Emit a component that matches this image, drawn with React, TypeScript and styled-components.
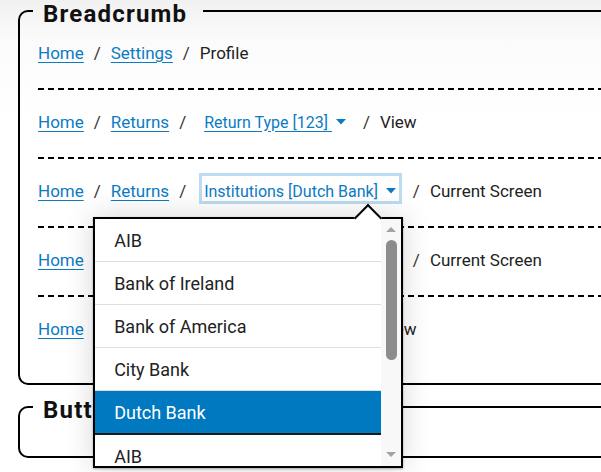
import React from "react";
import styled, { createGlobalStyle } from "styled-components";

const GlobalStyle = createGlobalStyle`
  html, body {
    margin: 0;
    padding: 0;
  }
  body {
    width: 601px;
    height: 472px;
    overflow: hidden;
    font-family: Roboto, "Liberation Sans", Arial, sans-serif;
    color: #222;
    background: linear-gradient(180deg, #f1f1f1 0, #fbfbfb 40px, #ffffff 120px);
  }
`;

const Page = styled.div`
  width: 760px;
  padding: 0 0 0 18px;
  margin-top: -5px;
`;

const Section = styled.fieldset<{ $gap?: number }>`
  margin: 0 0 ${p => p.$gap ?? 0}px 0;
  padding: 0 0 17px 18px;
  border: 2px solid #000;
  border-radius: 10px;
  min-width: 0;
`;

const Legend = styled.legend`
  margin-left: -5px;
  padding: 6px 16px 0 10px;
  font-size: 24px;
  line-height: 26px;
  font-weight: 700;
  letter-spacing: 1.2px;
  color: #111;
`;

const Rows = styled.div`
  margin-top: -6px;
`;

const EmptyBody = styled.div`
  height: 16px;
`;

const Row = styled.nav<{ $last?: boolean }>`
  display: flex;
  align-items: center;
  height: 69px;
  box-sizing: border-box;
  padding-bottom: 5px;
  font-size: 17px;
  background: ${p =>
    p.$last
      ? "none"
      : "linear-gradient(to right, #000 6px, transparent 6px) 0 100% / 10px 2px repeat-x"};
`;

const Crumb = styled.a`
  color: #0b7bc4;
  text-decoration: underline;
  text-underline-offset: 3px;
  cursor: pointer;
`;

const Current = styled.span`
  color: #222;
`;

const Sep = styled.span`
  margin: 0 10px;
  color: #333;
`;

const ToggleWrap = styled.span`
  position: relative;
  display: inline-flex;
  margin: 0 1px 5px 3px;
`;

const Toggle = styled.button<{ $open?: boolean }>`
  display: inline-flex;
  align-items: center;
  gap: 4px;
  height: 31px;
  box-sizing: border-box;
  padding: 5px 3px 0 2px;
  margin: 0;
  border: 3px solid ${p => (p.$open ? "#bcdcf2" : "transparent")};
  background: transparent;
  font: inherit;
  font-size: 16px;
  color: #0b7bc4;
  cursor: pointer;
`;

const ToggleText = styled.span<{ $open?: boolean }>`
  text-decoration: ${p => (p.$open ? "none" : "underline")};
  text-underline-offset: 3px;
`;

const Menu = styled.div`
  position: absolute;
  z-index: 10;
  top: 44px;
  left: -106px;
  width: 310px;
  height: 251px;
  box-sizing: border-box;
  display: flex;
  border: 2px solid #000;
  background: #fff;
  box-shadow: 0 0 28px rgba(0, 0, 0, 0.16), 0 1px 2px rgba(0, 0, 0, 0.3);
`;

const Notch = styled.span`
  position: absolute;
  top: -11px;
  left: 263px;
  width: 20px;
  height: 20px;
  box-sizing: border-box;
  border-top: 2px solid #000;
  border-left: 2px solid #000;
  background: #fff;
  transform: rotate(45deg);
`;

const Options = styled.ul`
  flex: 1;
  margin: 0;
  padding: 0;
  list-style: none;
  overflow: hidden;
`;

const Option = styled.li<{ $selected?: boolean }>`
  display: flex;
  align-items: center;
  height: 42px;
  padding-left: 19px;
  font-size: 18px;
  color: ${p => (p.$selected ? "#fff" : "#222")};
  background: ${p => (p.$selected ? "#0079c1" : "#fff")};
  border-bottom: ${p => (p.$selected ? "2px solid #1a1a1a" : "1px solid #dedede")};
`;

const Scrollbar = styled.div`
  width: 20px;
  display: flex;
  flex-direction: column;
  align-items: center;
  padding: 8px 0 9px;
  box-sizing: border-box;
  background: #f8f8f8;
`;

const Arrow = styled.span<{ $down?: boolean }>`
  width: 0;
  height: 0;
  border-left: 5px solid transparent;
  border-right: 5px solid transparent;
  ${p =>
    p.$down ? "border-top: 5px solid #a3a3a3;" : "border-bottom: 5px solid #a3a3a3;"}
`;

const Track = styled.div`
  flex: 1;
  width: 11px;
  padding-top: 8px;
`;

const Thumb = styled.div`
  height: 120px;
  border-radius: 6px;
  background: #8c8c8c;
`;

const Caret = () => (
  <svg width="10" height="6" viewBox="0 0 10 6" aria-hidden="true">
    <polygon points="0,0 10,0 5,5.5" fill="currentColor" />
  </svg>
);

const institutions = ["AIB", "Bank of Ireland", "Bank of America", "City Bank", "Dutch Bank", "AIB"];

type Item =
  | { kind: "link"; label: string }
  | { kind: "text"; label: string }
  | { kind: "menu"; label: string; open?: boolean };

const Dropdown = ({ item }: { item: { label: string; open?: boolean } }) => (
  <ToggleWrap>
    <Toggle $open={item.open} aria-expanded={item.open ? "true" : "false"}>
      <ToggleText $open={item.open}>{item.label}{"\u00a0"}</ToggleText>
      <Caret />
    </Toggle>
    {item.open && (
      <Menu role="listbox">
        <Notch />
        <Options>
          {institutions.map((name, i) => (
            <Option key={i} $selected={i === 4} role="option">
              {name}
            </Option>
          ))}
        </Options>
        <Scrollbar>
          <Arrow />
          <Track>
            <Thumb />
          </Track>
          <Arrow $down />
        </Scrollbar>
      </Menu>
    )}
  </ToggleWrap>
);

const Breadcrumb = ({ items, last }: { items: Item[]; last?: boolean }) => (
  <Row $last={last}>
    {items.map((item, i) => (
      <React.Fragment key={i}>
        {i > 0 && <Sep>/</Sep>}
        {item.kind === "link" && <Crumb>{item.label}</Crumb>}
        {item.kind === "text" && <Current>{item.label}</Current>}
        {item.kind === "menu" && <Dropdown item={item} />}
      </React.Fragment>
    ))}
  </Row>
);

const home: Item = { kind: "link", label: "Home" };
const returns: Item = { kind: "link", label: "Returns" };

const rows: Item[][] = [
  [home, { kind: "link", label: "Settings" }, { kind: "text", label: "Profile" }],
  [home, returns, { kind: "menu", label: "Return Type [123]" }, { kind: "text", label: "View" }],
  [home, returns, { kind: "menu", label: "Institutions [Dutch Bank]", open: true }, { kind: "text", label: "Current Screen" }],
  [home, returns, { kind: "menu", label: "Institutions [Dutch Bank]" }, { kind: "text", label: "Current Screen" }],
  [home, returns, { kind: "menu", label: "Return Type [123]" }, { kind: "text", label: "View" }],
];

export default function App() {
  return (
    <>
      <GlobalStyle />
      <Page>
        <Section $gap={6}>
          <Legend>Breadcrumb</Legend>
          <Rows>
            {rows.map((items, i) => (
              <Breadcrumb key={i} items={items} last={i === rows.length - 1} />
            ))}
          </Rows>
        </Section>
        <Section>
          <Legend>Buttons</Legend>
          <EmptyBody />
        </Section>
      </Page>
    </>
  );
}
